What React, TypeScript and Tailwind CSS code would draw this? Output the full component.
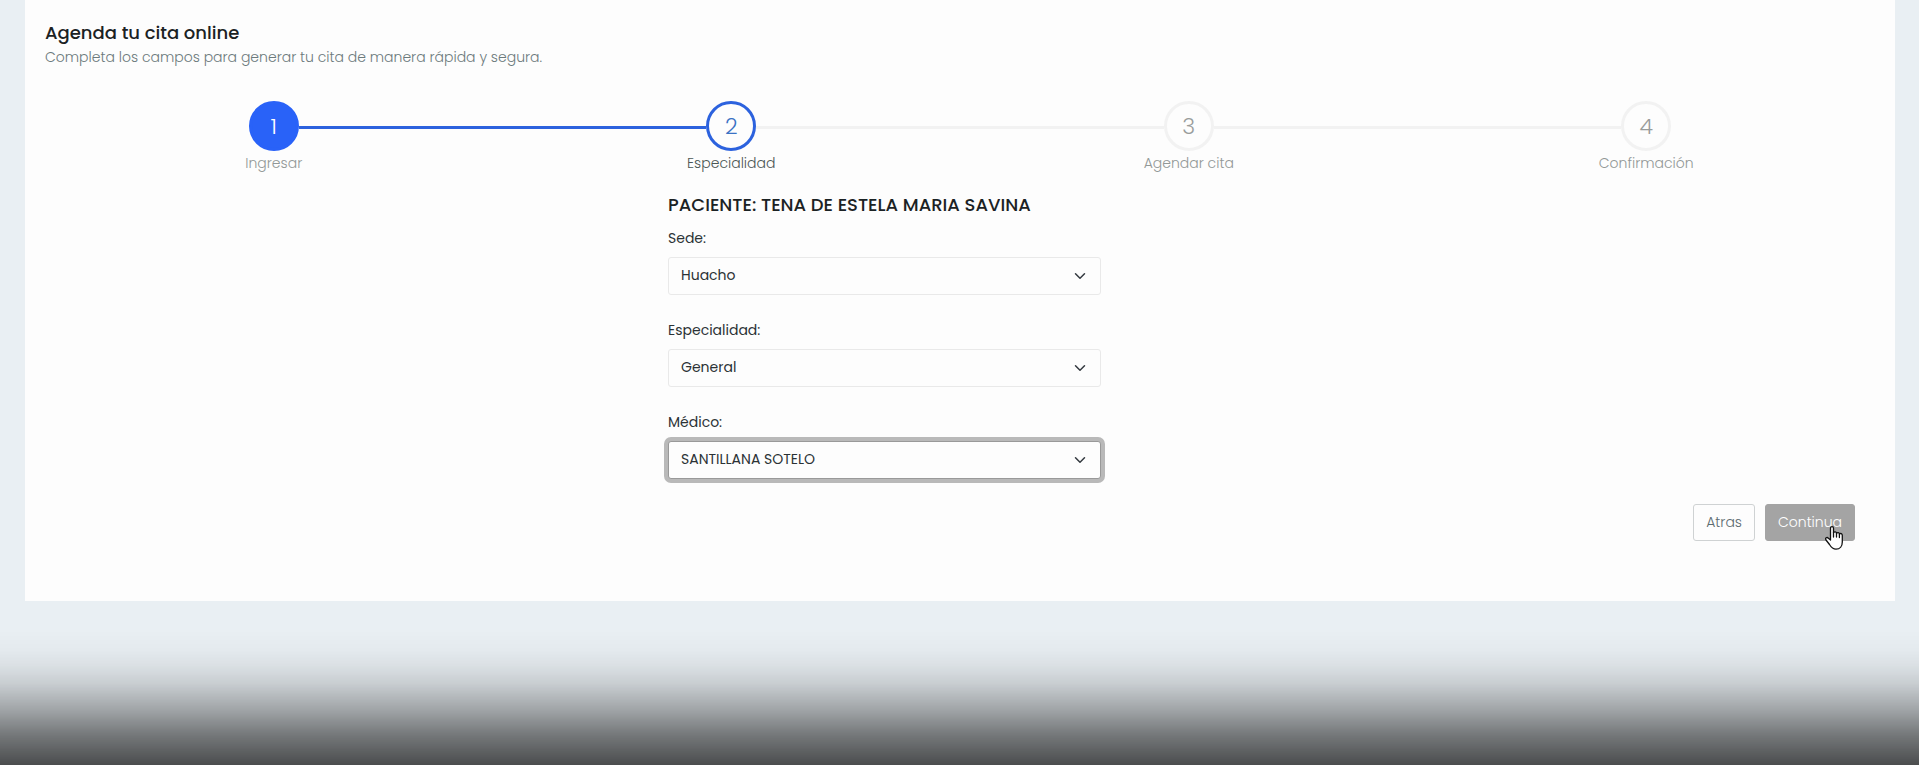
import React, { useState } from 'react';

const steps = ['Ingresar', 'Especialidad', 'Agendar cita', 'Confirmación'];

interface SelectFieldProps {
  id: string;
  label: string;
  options: string[];
  focused?: boolean;
}

function SelectField({ id, label, options, focused = false }: SelectFieldProps) {
  const [value, setValue] = useState(options[0]);

  return (
    <div className="mb-[25px]">
      <label htmlFor={id} className="block mb-2 text-sm leading-[21px] text-[#2b3235]">
        {label}
      </label>
      <div className="grid items-center">
        <select
          id={id}
          value={value}
          onChange={(e) => setValue(e.target.value)}
          className={`col-start-1 row-start-1 w-full h-[38px] appearance-none rounded-[3px] border bg-[#fdfdfd] pl-3 pr-9 pb-0.5 text-sm text-[#2b3235] outline-none ${
            focused ? 'border-[#999999] ring-4 ring-[#b9b9b9]' : 'border-[#e9e9e9]'
          }`}
        >
          {options.map((option) => (
            <option key={option}>{option}</option>
          ))}
        </select>
        <svg
          className="col-start-1 row-start-1 justify-self-end mr-[15px] w-3 h-3 pointer-events-none"
          viewBox="0 0 16 16"
          fill="none"
          aria-hidden="true"
        >
          <path d="M2 5l6 6 6-6" stroke="#343a40" strokeWidth="2" strokeLinecap="round" strokeLinejoin="round" />
        </svg>
      </div>
    </div>
  );
}

function Stepper({ current }: { current: number }) {
  return (
    <ol className="grid grid-cols-4">
      {steps.map((step, index) => {
        const number = index + 1;
        const done = number < current;
        const active = number === current;

        return (
          <li key={step} className="flex flex-col items-center">
            <div className="flex w-full items-center">
              {/* Line coming from the previous step */}
              <span
                className={`h-[3px] flex-1 mt-0.5 ${
                  index === 0 ? 'bg-transparent' : number <= current ? 'bg-[#2c62de]' : 'bg-[#f2f2f2]'
                }`}
              />
              <span
                className={`flex size-[50px] items-center justify-center rounded-full border-3 text-[22px] font-light ${
                  done
                    ? 'border-[#2962f8] bg-[#2962f8] text-white'
                    : active
                      ? 'border-[#2c62de] text-[#3a72c4]'
                      : 'border-[#f2f2f2] text-[#999c9b]'
                }`}
              >
                {number}
              </span>
              {/* Line going to the next step */}
              <span
                className={`h-[3px] flex-1 mt-0.5 ${
                  number === steps.length ? 'bg-transparent' : done ? 'bg-[#2c62de]' : 'bg-[#f2f2f2]'
                }`}
              />
            </div>
            <span className={`mt-0.5 text-sm leading-[21px] font-light ${active ? 'text-[#4b5654]' : 'text-[#929897]'}`}>
              {step}
            </span>
          </li>
        );
      })}
    </ol>
  );
}

export default function App() {
  return (
    <div className="min-h-screen bg-[#e9eff3] pl-[25px] pr-6 font-['Poppins','Inter',sans-serif]">
      <main className="bg-[#fdfdfd] px-5 pt-5 pb-[60px]">
        <h1 className="mb-px text-lg leading-[26px] font-medium text-[#1b2224]">Agenda tu cita online</h1>
        <p className="text-sm leading-[21px] font-light text-[#6c7a7c]">
          Completa los campos para generar tu cita de manera rápida y segura.
        </p>

        <div className="mt-[33px]">
          <Stepper current={2} />
        </div>

        <form onSubmit={(e) => e.preventDefault()}>
          <div className="grid grid-cols-12 mt-[19px]">
            <div className="col-start-5 col-span-3 pl-[13px] pr-3">
              <h2 className="mb-[11px] text-lg leading-[24px] font-medium whitespace-nowrap text-[#1b2224]">
                PACIENTE: TENA DE ESTELA MARIA SAVINA
              </h2>
              <SelectField id="sede" label="Sede:" options={['Huacho']} />
              <SelectField id="especialidad" label="Especialidad:" options={['General']} />
              <SelectField id="medico" label="Médico:" options={['SANTILLANA SOTELO']} focused />
            </div>
          </div>

          <div className="flex justify-end gap-2.5 pr-5">
            <button
              type="button"
              className="h-[37px] rounded-[3px] border border-[#cfd2d3] px-3 pb-0.5 text-sm font-light text-[#5c6b70] cursor-pointer"
            >
              Atras
            </button>
            <div className="relative">
              <button
                type="submit"
                className="h-[37px] rounded-[3px] border border-[#a4a4a4] bg-[#a4a4a4] px-3 pb-0.5 text-sm font-light text-white cursor-pointer"
              >
                Continua
              </button>
              {/* Hand pointer */}
              <svg
                className="absolute left-[60px] top-[22px] w-[18px] h-6 pointer-events-none"
                viewBox="0 0 18 24"
                aria-hidden="true"
              >
                <path
                  d="M5.500 14V2.200C5.500 .2 8.500 .2 8.500 2.200V6.500C9.500 5.300 11.500 5.700 11.500 7.200C12.500 6.100 14.400 6.500 14.400 8C15.600 7 17.300 7.600 17.300 9.500V16C17.300 20 15 23.200 11 23.200C7.500 23.200 6 21 4.500 18.500L1 14C-.2 12 2 10.800 3.400 12.200Z"
                  fill="#fff"
                  stroke="#111"
                  strokeWidth="1.3"
                  strokeLinejoin="round"
                />
                <path d="M8.500 6.500V11M11.500 7.200V11M14.400 8V11.500" stroke="#111" strokeWidth="1.3" strokeLinecap="round" />
              </svg>
            </div>
          </div>
        </form>
      </main>

      {/* Bottom shade */}
      <div className="fixed inset-x-0 bottom-0 h-[135px] pointer-events-none bg-[linear-gradient(to_bottom,transparent_0%,rgba(0,0,0,0.02)_15%,rgba(0,0,0,0.06)_26%,rgba(0,0,0,0.14)_40%,rgba(0,0,0,0.31)_59%,rgba(0,0,0,0.5)_78%,rgba(0,0,0,0.68)_100%)]" />
    </div>
  );
}
